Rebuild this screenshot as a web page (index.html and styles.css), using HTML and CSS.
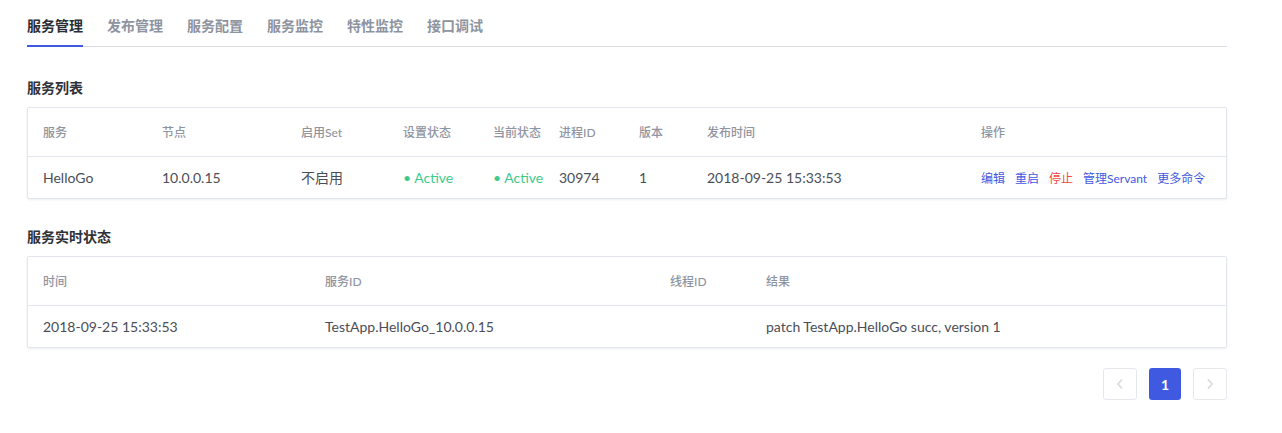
FILE: index.html
```html
<!DOCTYPE html>
<html lang="zh-CN">
<head>
<meta charset="utf-8">
<title>服务管理</title>
<link rel="stylesheet" href="styles.css">
</head>
<body>
<div class="page">
  <nav class="tabs">
    <a class="tab active">服务管理</a>
    <a class="tab">发布管理</a>
    <a class="tab">服务配置</a>
    <a class="tab">服务监控</a>
    <a class="tab">特性监控</a>
    <a class="tab">接口调试</a>
  </nav>

  <h3 class="section-title first">服务列表</h3>
  <div class="card">
    <table class="grid">
      <colgroup>
        <col style="width:119px"><col style="width:139px"><col style="width:102px"><col style="width:90px"><col style="width:66px"><col style="width:80px"><col style="width:68px"><col style="width:274px"><col>
      </colgroup>
      <thead>
        <tr><th>服务</th><th>节点</th><th>启用Set</th><th>设置状态</th><th>当前状态</th><th>进程ID</th><th>版本</th><th>发布时间</th><th>操作</th></tr>
      </thead>
      <tbody>
        <tr>
          <td>HelloGo</td>
          <td>10.0.0.15</td>
          <td>不启用</td>
          <td class="status">• Active</td>
          <td class="status">• Active</td>
          <td>30974</td>
          <td>1</td>
          <td>2018-09-25 15:33:53</td>
          <td class="ops"><a class="op">编辑</a><a class="op">重启</a><a class="op danger">停止</a><a class="op">管理Servant</a><a class="op">更多命令</a></td>
        </tr>
      </tbody>
    </table>
  </div>

  <h3 class="section-title">服务实时状态</h3>
  <div class="card">
    <table class="grid">
      <colgroup>
        <col style="width:282px"><col style="width:345px"><col style="width:96px"><col>
      </colgroup>
      <thead>
        <tr><th>时间</th><th>服务ID</th><th>线程ID</th><th>结果</th></tr>
      </thead>
      <tbody>
        <tr><td>2018-09-25 15:33:53</td><td>TestApp.HelloGo_10.0.0.15</td><td></td><td>patch TestApp.HelloGo succ, version 1</td></tr>
      </tbody>
    </table>
  </div>

  <div class="pager">
    <button class="pg-btn side" aria-label="prev"><svg width="10" height="12" viewBox="0 0 10 12"><path d="M6.5 2 L3 6 L6.5 10" fill="none" stroke="#d8dbe2" stroke-width="1.8" stroke-linecap="round" stroke-linejoin="round"/></svg></button>
    <button class="pg-btn current">1</button>
    <button class="pg-btn side" aria-label="next"><svg width="10" height="12" viewBox="0 0 10 12"><path d="M3.5 2 L7 6 L3.5 10" fill="none" stroke="#d8dbe2" stroke-width="1.8" stroke-linecap="round" stroke-linejoin="round"/></svg></button>
  </div>
</div>
</body>
</html>
```

FILE: styles.css
```css
* { box-sizing: border-box; }
html, body { margin: 0; padding: 0; background: #fff; }
body {
  font-family: Lato, "Noto Sans CJK SC", sans-serif;
  font-size: 14px;
  color: #4a4d57;
}
.page { padding: 16px 55px 0 27px; width: 1282px; }

.tabs {
  display: flex;
  gap: 24px;
  border-bottom: 1px solid #d9dce3;
  width: 1200px;
}
.tab {
  position: relative;
  font-size: 14px;
  line-height: 20px;
  padding-bottom: 10px;
  font-weight: 700;
  color: #8e93a0;
  cursor: pointer;
}
.tab.active { color: #2b2e36; }
.tab.active::after {
  content: "";
  position: absolute;
  left: 0; right: 0; bottom: -1px;
  height: 2px;
  background: #3f5ae0;
}

.section-title {
  margin: 28px 0 9px;
  font-size: 14px;
  line-height: 20px;
  font-weight: 700;
  color: #2f323a;
}
.section-title.first { margin-top: 31px; }

.card {
  width: 1200px;
  border: 1px solid #e2e5ec;
  border-radius: 2px;
  box-shadow: 0 1px 2px rgba(30, 40, 70, 0.08);
  background: #fff;
}
.grid {
  width: 100%;
  border-collapse: collapse;
  table-layout: fixed;
}
.grid th {
  height: 48px;
  padding: 0 0 0 15px;
  text-align: left;
  font-size: 12px;
  font-weight: 500;
  color: #8f94a1;
  border-bottom: 1px solid #e2e5ec;
  white-space: nowrap;
}
.grid td {
  height: 42px;
  padding: 0 0 0 15px;
  font-size: 14px;
  color: #4a4d57;
  white-space: nowrap;
}
.grid td.status { color: #3ccb8c; }
.grid td.ops { font-size: 12px; }
.op {
  color: #3f5ae0;
  margin-right: 10px;
  cursor: pointer;
}
.op:last-child { margin-right: 0; }
.op.danger { color: #f0483e; }

.pager {
  width: 1200px;
  display: flex;
  justify-content: flex-end;
  align-items: center;
  gap: 12px;
  margin-top: 20px;
}
.pg-btn {
  height: 32px;
  display: flex;
  align-items: center;
  justify-content: center;
  font-family: Lato, sans-serif;
  border-radius: 3px;
  padding: 0;
}
.pg-btn.side {
  width: 34px;
  border: 1px solid #e6e8ee;
  background: #fff;
}
.pg-btn.current {
  width: 32px;
  border: none;
  background: #3f5ae0;
  color: #fff;
  font-size: 14px;
  font-weight: 700;
}
```
